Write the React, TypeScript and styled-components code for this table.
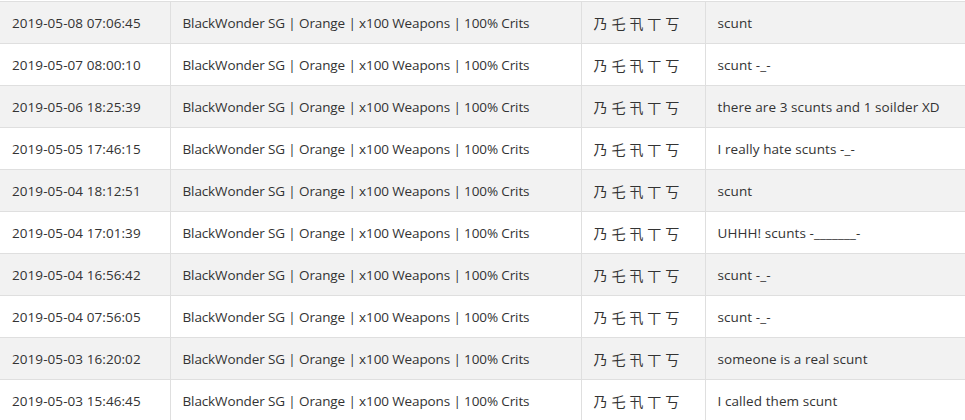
import React from "react";
import styled, { createGlobalStyle } from "styled-components";

const Global = createGlobalStyle`
  html, body { margin: 0; padding: 0; background: #fff; }
  body { font-family: "Open Sans", "Noto Sans CJK SC", sans-serif; }
`;

const Wrap = styled.div`
  padding-top: 1px;
  width: 965px;
  overflow: hidden;
`;

const Table = styled.table`
  border-collapse: collapse;
  table-layout: fixed;
  width: 1000px;
  color: #333;
`;

const Row = styled.tr<{ $odd: boolean }>`
  height: 42px;
  background: ${(p) => (p.$odd ? "#f2f2f2" : "#fff")};
`;

const Cell = styled.td<{ $cjk?: boolean; $track?: number }>`
  border: 1px solid #dfdfdf;
  padding: 0 12px;
  vertical-align: middle;
  white-space: nowrap;
  font-family: ${(p) =>
    p.$cjk ? '"Noto Sans CJK SC", sans-serif' : '"Open Sans", sans-serif'};
  font-size: ${(p) => (p.$cjk ? "14px" : "13.5px")};
  letter-spacing: ${(p) => p.$track ?? 0}px;
  word-spacing: ${(p) => (p.$cjk ? "0.8px" : "0")};
  &:first-child { border-left: none; }
`;

const rows: [string, string][] = [
  ["2019-05-08 07:06:45", "scunt"],
  ["2019-05-07 08:00:10", "scunt -_-"],
  ["2019-05-06 18:25:39", "there are 3 scunts and 1 soilder XD"],
  ["2019-05-05 17:46:15", "I really hate scunts -_-"],
  ["2019-05-04 18:12:51", "scunt"],
  ["2019-05-04 17:01:39", "UHHH! scunts -_______-"],
  ["2019-05-04 16:56:42", "scunt -_-"],
  ["2019-05-04 07:56:05", "scunt -_-"],
  ["2019-05-03 16:20:02", "someone is a real scunt"],
  ["2019-05-03 15:46:45", "I called them scunt"],
];

export default function App() {
  return (
    <Wrap>
      <Global />
      <Table>
        <colgroup>
          <col style={{ width: 170 }} />
          <col style={{ width: 411 }} />
          <col style={{ width: 124 }} />
          <col />
        </colgroup>
        <tbody>
          {rows.map(([d, m], i) => (
            <Row key={i} $odd={i % 2 === 0}>
              <Cell $track={0.07}>{d}</Cell>
              <Cell $track={-0.12}>BlackWonder SG | Orange | x100 Weapons | 100% Crits</Cell>
              <Cell $cjk>乃 乇 卂 丅 丂</Cell>
              <Cell $track={0.08}>{m}</Cell>
            </Row>
          ))}
        </tbody>
      </Table>
    </Wrap>
  );
}
